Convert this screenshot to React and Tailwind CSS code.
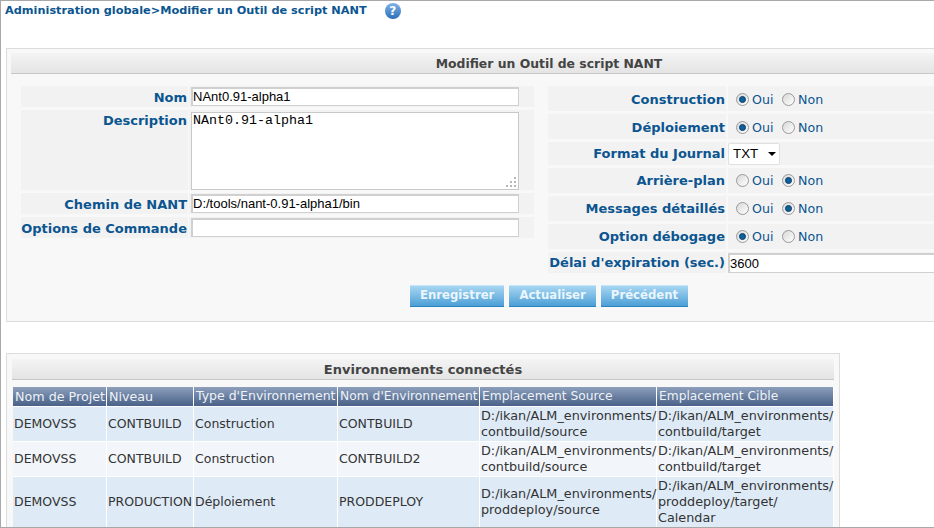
import React from 'react';

const Radio = ({ on }) => (
    <span className="relative w-[13px] h-[13px] rounded-full border border-[#9a9a9a] bg-gradient-to-br from-[#d8d8d8] to-white flex items-center justify-center shrink-0">
        {on && <span className="w-[7px] h-[7px] rounded-full bg-[#0f5f9a] border border-[#0a3f6a]"></span>}
    </span>
);

const YesNo = ({ value, low }) => (
    <div className={`flex items-center text-[12.6px] text-[#0b5590] pl-[8px] ${low ? 'pt-[3px]' : 'pt-[1px]'}`}>
        <Radio on={value === 'oui'} />
        <span className="ml-[3px] w-[30px]">Oui</span>
        <Radio on={value === 'non'} />
        <span className="ml-[3px]">Non</span>
    </div>
);

const inputClass = "block ml-[2px] w-[328px] h-[19px] bg-white border-2 border-[#d0d0d0] border-b border-r px-0 text-[13px] font-['Liberation_Sans',sans-serif] text-black outline-none";

const LeftRow = ({ label, children, h = 'h-[21px]', labelPad = 'pt-[1px]' }) => (
    <div className={`flex gap-[1px] ${h}`}>
        <div className={`w-[167px] bg-[#f2f2f2] text-right pr-[1px] ${labelPad} text-[13px] font-bold text-[#0b5590] leading-[21px] whitespace-nowrap`}>{label}</div>
        <div className="flex-1 bg-[#f2f2f2] pt-[1px]">{children}</div>
    </div>
);

const RightRow = ({ label, children, h = 'h-[25px]', low }) => (
    <div className={`flex gap-[2px] ${h}`}>
        <div className={`w-[178px] bg-[#f2f2f2] text-right pr-[1px] ${low ? 'pt-[3px]' : 'pt-[1px]'} text-[13px] font-bold text-[#0b5590] flex items-center justify-end whitespace-nowrap`}>{label}</div>
        <div className="flex-1 bg-[#f2f2f2] flex items-center">{children}</div>
    </div>
);

const TitleBar = ({ children, size = 'text-[13px]' }) => (
    <div className={`h-[21px] bg-gradient-to-b from-[#f4f4f4] to-[#e4e4e4] border-b border-[#c8c8c8] text-center ${size} font-bold text-[#444] leading-[22px]`}>{children}</div>
);

const SaveButton = ({ children }) => (
    <button className="h-[22px] px-[10px] bg-gradient-to-b from-[#a6d6f2] to-[#4a9fd6] border-b border-[#2a83bf] border-t border-t-[#c4e6f8] text-[11.7px] font-bold text-[#eaf6fd]">{children}</button>
);

const rows = [
    ['DEMOVSS', 'CONTBUILD', 'Construction', 'CONTBUILD', ['D:/ikan/ALM_environments/', 'contbuild/source'], ['D:/ikan/ALM_environments/', 'contbuild/target']],
    ['DEMOVSS', 'CONTBUILD', 'Construction', 'CONTBUILD2', ['D:/ikan/ALM_environments/', 'contbuild/source'], ['D:/ikan/ALM_environments/', 'contbuild/target']],
    ['DEMOVSS', 'PRODUCTION', 'Déploiement', 'PRODDEPLOY', ['D:/ikan/ALM_environments/', 'proddeploy/source'], ['D:/ikan/ALM_environments/', 'proddeploy/target/', 'Calendar']],
];

const headers = [
    ['Nom de Projet', 'w-[94px] text-[12.7px]'],
    ['Niveau', 'w-[87px] text-[12.7px]'],
    ['Type d\'Environnement', 'w-[144px] text-[12.5px]'],
    ['Nom d\'Environnement', 'w-[142px] text-[12.3px]'],
    ['Emplacement Source', 'w-[177px] text-[12.25px]'],
    ['Emplacement Cible', 'w-[177px] text-[12.25px]'],
];

const rowStyles = ['h-[35px] bg-[#deebf7]', 'h-[35px] bg-[#f2f6fb]', 'h-[51px] bg-[#deebf7]'];

export default function App() {
    return (
        <div className="w-[934px] h-[528px] overflow-hidden bg-white border-l border-t border-b border-[#a8a8a8] font-['DejaVu_Sans',sans-serif]">
            <div className="flex items-center h-[20px] pl-[4px]">
                <span className="text-[11.3px] pt-[1px] font-bold text-[#0b5590] whitespace-nowrap">Administration globale&gt;Modifier un Outil de script NANT</span>
                <span className="ml-[18px] w-[16px] h-[16px] rounded-full bg-gradient-to-b from-[#7fb2e6] to-[#2a6fb8] text-white text-[12px] font-bold flex items-center justify-center">?</span>
            </div>

            <div className="ml-[5px] mt-[27px] w-[1086px] h-[274px] bg-[#f8f8f8] border border-[#dcdcdc] pl-[4px] pr-[4px] pt-[4px]">
                <TitleBar size="text-[12.4px]">Modifier un Outil de script NANT</TitleBar>
                <div className="flex mt-[12px] pl-[10px]">
                    <div className="w-[513px] flex flex-col gap-[3px]">
                        <LeftRow label="Nom">
                            <input defaultValue="NAnt0.91-alpha1" className={inputClass} />
                        </LeftRow>
                        <LeftRow label="Description" h="h-[80px]" labelPad="pt-0">
                            <div className="relative ml-[2px] w-[328px] h-[78px] mt-[1px]">
                                <textarea defaultValue="NAnt0.91-alpha1" className="block resize-none w-full h-full bg-white border border-[#c8c8c8] px-[1px] text-[13.33px] leading-[15px] font-['Liberation_Mono',monospace] text-black outline-none"></textarea>
                                <svg className="absolute right-[2px] bottom-[2px]" width="12" height="12" viewBox="0 0 12 12" fill="#b8b8b8">
                                    <rect x="9" y="1" width="2" height="2" />
                                    <rect x="5" y="5" width="2" height="2" />
                                    <rect x="9" y="5" width="2" height="2" />
                                    <rect x="1" y="9" width="2" height="2" />
                                    <rect x="5" y="9" width="2" height="2" />
                                    <rect x="9" y="9" width="2" height="2" />
                                </svg>
                            </div>
                        </LeftRow>
                        <LeftRow label="Chemin de NANT">
                            <input defaultValue="D:/tools/nant-0.91-alpha1/bin" className={inputClass} />
                        </LeftRow>
                        <LeftRow label="Options de Commande">
                            <input defaultValue="" className={inputClass} />
                        </LeftRow>
                    </div>
                    <div className="ml-[14px] flex-1 flex flex-col gap-[3px]">
                        <RightRow low label="Construction"><YesNo low value="oui" /></RightRow>
                        <RightRow low label="Déploiement"><YesNo low value="oui" /></RightRow>
                        <RightRow label="Format du Journal" h="h-[23px]">
                            <div className="relative w-[52px] h-[22px] bg-white border border-[#e0e0e0] rounded-[2px] text-[13.33px] font-['Liberation_Sans',sans-serif] text-black pl-[4px] leading-[20px]">
                                TXT
                                <span className="absolute right-[3px] top-[8px] w-0 h-0 border-l-[4px] border-r-[4px] border-t-[4px] border-l-transparent border-r-transparent border-t-black"></span>
                            </div>
                        </RightRow>
                        <RightRow label="Arrière-plan"><YesNo value="non" /></RightRow>
                        <RightRow label="Messages détaillés"><YesNo value="non" /></RightRow>
                        <RightRow label="Option débogage"><YesNo value="oui" /></RightRow>
                        <RightRow label="Délai d'expiration (sec.)" h="h-[21px]">
                            <input defaultValue="3600" className="block w-full h-[20px] bg-white border-2 border-[#d0d0d0] border-b border-r px-0 text-[13px] font-['Liberation_Sans',sans-serif] text-black outline-none" />
                        </RightRow>
                    </div>
                </div>
                <div className="flex gap-[5px] mt-[12px] ml-[399px]">
                    <SaveButton>Enregistrer</SaveButton>
                    <SaveButton>Actualiser</SaveButton>
                    <SaveButton>Précédent</SaveButton>
                </div>
            </div>

            <div className="ml-[5px] mt-[31px] w-[834px] h-[200px] bg-[#f8f8f8] border border-[#dcdcdc] pl-[5px] pr-[5px] pt-[5px]">
                <TitleBar>Environnements connectés</TitleBar>
                <table className="mt-[7px] ml-[1px] w-[821px] table-fixed border-separate border-spacing-0 text-[12.5px] text-[#333]">
                    <thead>
                        <tr className="h-[19px]">
                            {headers.map(([h, w]) => (
                                <th key={h} className={`${w} p-0 pl-[2px] font-normal text-left whitespace-nowrap overflow-hidden border-r border-b border-white text-[#eef2f7] bg-gradient-to-b from-[#8d9fbc] to-[#4a6288]`}>{h}</th>
                            ))}
                        </tr>
                    </thead>
                    <tbody>
                        {rows.map((r, i) => (
                            <tr key={i} className={rowStyles[i]}>
                                {r.map((c, j) => (
                                    <td key={j} className="p-0 pl-[1px] border-r border-b border-white leading-[16px] whitespace-nowrap">
                                        {Array.isArray(c) ? c.map(line => <div key={line} className="text-[12.8px]">{line}</div>) : c}
                                    </td>
                                ))}
                            </tr>
                        ))}
                    </tbody>
                </table>
            </div>
        </div>
    );
}
